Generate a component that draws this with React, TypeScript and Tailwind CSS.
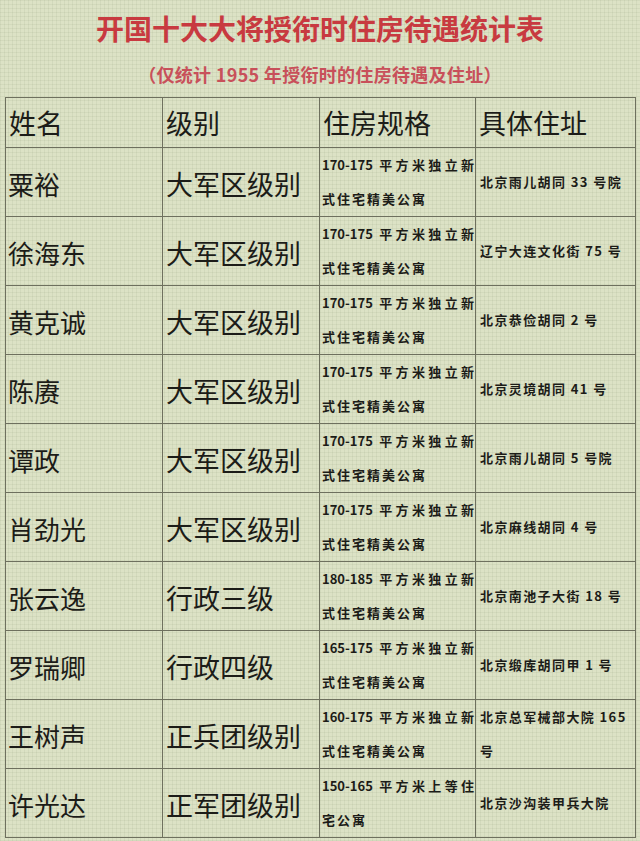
import React from 'react';

interface Row {
  name: string;
  level: string;
  spec: [string, string];
  address: string;
}

const rows: Row[] = [
  { name: '粟裕', level: '大军区级别', spec: ['170-175 平方米独立新', '式住宅精美公寓'], address: '北京雨儿胡同 33 号院' },
  { name: '徐海东', level: '大军区级别', spec: ['170-175 平方米独立新', '式住宅精美公寓'], address: '辽宁大连文化街 75 号' },
  { name: '黄克诚', level: '大军区级别', spec: ['170-175 平方米独立新', '式住宅精美公寓'], address: '北京恭俭胡同 2 号' },
  { name: '陈赓', level: '大军区级别', spec: ['170-175 平方米独立新', '式住宅精美公寓'], address: '北京灵境胡同 41 号' },
  { name: '谭政', level: '大军区级别', spec: ['170-175 平方米独立新', '式住宅精美公寓'], address: '北京雨儿胡同 5 号院' },
  { name: '肖劲光', level: '大军区级别', spec: ['170-175 平方米独立新', '式住宅精美公寓'], address: '北京麻线胡同 4 号' },
  { name: '张云逸', level: '行政三级', spec: ['180-185 平方米独立新', '式住宅精美公寓'], address: '北京南池子大街 18 号' },
  { name: '罗瑞卿', level: '行政四级', spec: ['165-175 平方米独立新', '式住宅精美公寓'], address: '北京缎库胡同甲 1 号' },
  { name: '王树声', level: '正兵团级别', spec: ['160-175 平方米独立新', '式住宅精美公寓'], address: '北京总军械部大院 165 号' },
  { name: '许光达', level: '正军团级别', spec: ['150-165 平方米上等住', '宅公寓'], address: '北京沙沟装甲兵大院' },
];

const font = "font-['Noto_Sans_CJK_SC','Noto_Sans',sans-serif]";

export default function App() {
  return (
    <div
      className={`w-[640px] h-[841px] overflow-hidden bg-[#dce2c5] ${font} bg-[linear-gradient(rgba(90,100,70,0.07)_1px,transparent_1px),linear-gradient(90deg,rgba(90,100,70,0.07)_1px,transparent_1px)] bg-[size:4px_4px]`}
    >
      <div className="flex flex-col items-center pt-[9px]">
        <h1 className="text-[28px] leading-[38px] font-bold text-[#c83a40]">
          开国十大大将授衔时住房待遇统计表
        </h1>
        <p className="mt-[16px] text-[18px] leading-[22px] font-bold text-[#c8505a] tracking-[0.3px]">
          （仅统计 1955 年授衔时的住房待遇及住址）
        </p>
      </div>

      <table className="ml-[5px] mt-[12px] w-[630px] table-fixed border-collapse text-[#1c1c18]">
        <colgroup>
          <col className="w-[157px]" />
          <col className="w-[157px]" />
          <col className="w-[156px]" />
          <col className="w-[160px]" />
        </colgroup>
        <thead>
          <tr className="h-[50px]">
            {['姓名', '级别', '住房规格', '具体住址'].map((h) => (
              <th
                key={h}
                className="border border-[#6e705e] pl-[3px] text-left align-middle text-[27px] font-normal leading-none"
              >
                {h}
              </th>
            ))}
          </tr>
        </thead>
        <tbody>
          {rows.map((r) => (
            <tr key={r.name} className="h-[68.7px]">
              <td className="border border-[#6e705e] pl-[2px] align-middle text-[26px] leading-none pt-[3px]">
                {r.name}
              </td>
              <td className="border border-[#6e705e] pl-[3px] align-middle text-[27px] leading-none pt-[3px]">
                {r.level}
              </td>
              <td className="border border-[#6e705e] pl-[2px] pr-[1px] align-middle text-[13px] font-bold leading-[34px]">
                <div className="text-justify [text-align-last:justify]">{r.spec[0]}</div>
                <div className="tracking-[2px]">{r.spec[1]}</div>
              </td>
              <td className="border border-[#6e705e] pl-[4px] pr-0 align-middle text-[13px] font-bold leading-[34px] tracking-[1.4px]">
                {r.address}
              </td>
            </tr>
          ))}
        </tbody>
      </table>
    </div>
  );
}
